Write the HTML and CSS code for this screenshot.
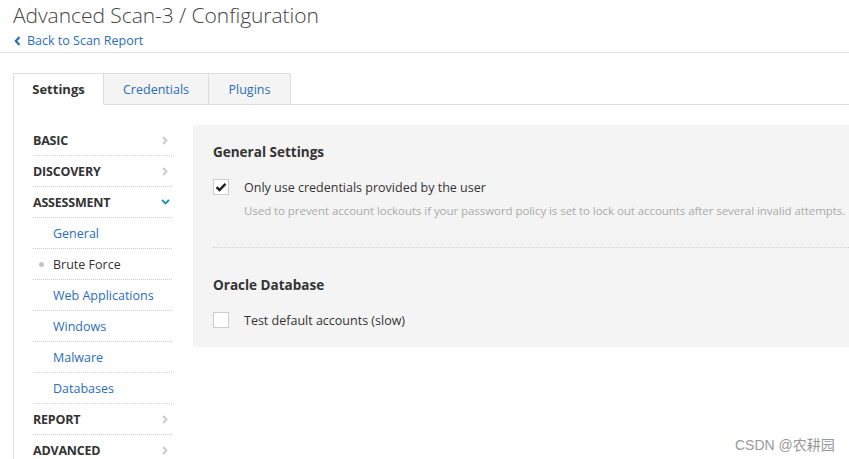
FILE: index.html
```html
<!DOCTYPE html>
<html>
<head>
<meta charset="utf-8">
<link rel="stylesheet" href="styles.css">
</head>
<body>
<header class="page-header">
  <h1 class="title">Advanced Scan-3 / Configuration</h1>
  <a class="back-link" href="#"><svg class="back-icon" width="7" height="10" viewBox="0 0 7 10"><path d="M5.5 1 L1.8 5 L5.5 9" fill="none" stroke="currentColor" stroke-width="2.2"/></svg>Back to Scan Report</a>
</header>
<main class="config">
  <nav class="tabs">
    <div class="tab active">Settings</div>
    <div class="tab">Credentials</div>
    <div class="tab last">Plugins</div>
    <div class="tab-fill"></div>
  </nav>
  <div class="body">
    <ul class="side">
      <li class="side-item section">BASIC<span class="chev"><svg width="6" height="9" viewBox="0 0 6 9"><path d="M1 1 L4.5 4.5 L1 8" fill="none" stroke="currentColor" stroke-width="1.8"/></svg></span></li>
      <li class="side-item section">DISCOVERY<span class="chev"><svg width="6" height="9" viewBox="0 0 6 9"><path d="M1 1 L4.5 4.5 L1 8" fill="none" stroke="currentColor" stroke-width="1.8"/></svg></span></li>
      <li class="side-item section">ASSESSMENT<span class="chev open"><svg width="9" height="6" viewBox="0 0 9 6"><path d="M1 1 L4.5 4.5 L8 1" fill="none" stroke="currentColor" stroke-width="1.8"/></svg></span></li>
      <li class="side-item sub">General</li>
      <li class="side-item sub current"><span class="dot"></span>Brute Force</li>
      <li class="side-item sub">Web Applications</li>
      <li class="side-item sub">Windows</li>
      <li class="side-item sub">Malware</li>
      <li class="side-item sub">Databases</li>
      <li class="side-item section">REPORT<span class="chev"><svg width="6" height="9" viewBox="0 0 6 9"><path d="M1 1 L4.5 4.5 L1 8" fill="none" stroke="currentColor" stroke-width="1.8"/></svg></span></li>
      <li class="side-item section">ADVANCED<span class="chev"><svg width="6" height="9" viewBox="0 0 6 9"><path d="M1 1 L4.5 4.5 L1 8" fill="none" stroke="currentColor" stroke-width="1.8"/></svg></span></li>
    </ul>
    <section class="panel">
      <h2 class="group-title">General Settings</h2>
      <div class="option">
        <span class="box checked"><svg width="12" height="10" viewBox="0 0 12 10"><path d="M1.5 5.2 L4.5 8 L10.5 1.8" fill="none" stroke="#222" stroke-width="2.4"/></svg></span>
        <span class="option-label">Only use credentials provided by the user</span>
      </div>
      <p class="help">Used to prevent account lockouts if your password policy is set to lock out accounts after several invalid attempts.</p>
      <div class="sep"></div>
      <h2 class="group-title second">Oracle Database</h2>
      <div class="option">
        <span class="box"></span>
        <span class="option-label">Test default accounts (slow)</span>
      </div>
    </section>
  </div>
</main>
<div class="watermark">CSDN @农耕园</div>
</body>
</html>
```
FILE: styles.css
```css
* { box-sizing: border-box; }
html, body { margin: 0; padding: 0; }
body {
  font-family: "Open Sans", "Noto Sans CJK SC", sans-serif;
  font-size: 13px;
  color: #333;
  background: #fff;
  width: 849px;
  height: 459px;
  overflow: hidden;
  position: relative;
}
.page-header {
  padding: 0 0 4px 13px;
  border-bottom: 1px solid #ddd;
  height: 53px;
}
.title {
  margin: 0;
  padding-top: 1px;
  font-size: 21px;
  font-weight: 300;
  color: #444;
  line-height: 28px;
  letter-spacing: -0.05px;
}
.back-link {
  display: flex;
  align-items: center;
  gap: 6px;
  margin-top: 3px;
  color: #2a6db8;
  text-decoration: none;
  font-size: 12.5px;
  line-height: 17px;
}
.back-icon { margin-left: 1px; }
.config {
  margin: 20px 0 0 13px;
  border-left: 1px solid #ddd;
}
.tabs {
  display: flex;
  height: 32px;
}
.tab {
  height: 32px;
  padding: 0 10px;
  display: flex;
  align-items: center;
  justify-content: center;
  color: #2a6db8;
  background: #f4f4f4;
  border-top: 1px solid #ddd;
  border-right: 1px solid #ddd;
  border-bottom: 1px solid #ddd;
  font-size: 12.5px;
  flex-shrink: 0;
}
.tab.active {
  width: 90px;
  background: #fff;
  color: #333;
  font-weight: 700;
  border-bottom-color: #fff;
  font-size: 13px;
}
.tab:nth-child(2) { width: 105px; }
.tab.last { width: 82px; border-top-right-radius: 3px; }
.tab-fill { flex: 1; border-bottom: 1px solid #ddd; }
.body {
  display: flex;
  padding-top: 20px;
  align-items: flex-start;
}
.side {
  list-style: none;
  margin: 0 0 0 19px;
  padding: 0;
  width: 139px;
  flex-shrink: 0;
}
.side-item {
  height: 31px;
  display: flex;
  align-items: center;
  border-bottom: 1px dotted #ccc;
  position: relative;
  white-space: nowrap;
}
.section {
  font-weight: 700;
  color: #333;
  font-size: 12.5px;
  letter-spacing: -0.2px;
}
.sub {
  padding-left: 20px;
  color: #2a6db8;
  font-size: 12.5px;
}
.sub.current { color: #333; }
.dot {
  position: absolute;
  left: 6px;
  top: 13px;
  width: 5px;
  height: 5px;
  border-radius: 50%;
  background: #c4c4c4;
}
.chev {
  margin-left: auto;
  margin-right: 4px;
  color: #c8c8c8;
  display: flex;
}
.chev.open { color: #2a8ab8; margin-right: 2px; }
.panel {
  flex: 1;
  min-width: 0;
  margin-left: 21px;
  background: #f4f4f4;
  padding: 17px 0 19px 20px;
  white-space: nowrap;
}
.group-title {
  margin: 0;
  font-size: 13.5px;
  font-weight: 700;
  line-height: 20px;
  color: #333;
}
.group-title.second { margin-top: 27px; }
.option {
  display: flex;
  align-items: center;
  margin-top: 17px;
  height: 16px;
}
.box {
  width: 16px;
  height: 16px;
  border: 1px solid #ccc;
  background: #fff;
  display: flex;
  align-items: center;
  justify-content: center;
  margin-right: 15px;
}
.option-label { font-size: 12.5px; color: #333; }
.help {
  margin: 8px 0 0 31px;
  font-size: 11.5px;
  letter-spacing: -0.06px;
  color: #aaa;
  line-height: 16px;
}
.sep {
  margin-top: 28px;
  border-top: 1px dotted #ccc;
}
.watermark {
  position: absolute;
  left: 735px;
  top: 434px;
  font-family: "Liberation Sans", "Noto Sans CJK SC", sans-serif;
  font-size: 14px;
  color: #999;
}
```
